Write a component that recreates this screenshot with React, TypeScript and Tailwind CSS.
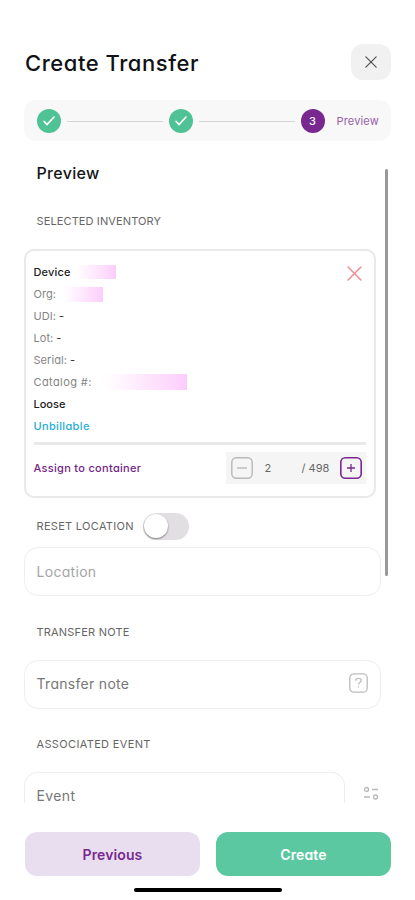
import React from "react";

const Check = () => (
  <span className="flex h-6 w-6 shrink-0 items-center justify-center rounded-full bg-[#4fc396]">
    <svg width="14" height="12" viewBox="0 0 14 12" fill="none" stroke="#fff" strokeWidth="1.6" strokeLinecap="round" strokeLinejoin="round">
      <path d="M2 6.3 5 9.6 12 2" />
    </svg>
  </span>
);

const Line = () => <span className="h-px w-24 shrink-0 bg-[#d6d6d6]" />;

const Cross = ({ size, color, width }: { size: number; color: string; width: number }) => (
  <svg width={size} height={size} viewBox="0 0 14 14" fill="none" stroke={color} strokeWidth={width} strokeLinecap="round">
    <path d="M1 1 13 13M13 1 1 13" />
  </svg>
);

const Detail = ({ label, value }: { label: string; value?: string }) => (
  <div className="flex h-[22px] items-center text-[11px] tracking-[0.05px] whitespace-nowrap text-[#858585]">
    {label}
    {value && <span className="ml-[3px] text-[#333]">{value}</span>}
  </div>
);

const redacted = "bg-gradient-to-r from-white to-[#fccdfb]";

export default function App() {
  return (
    <div className="flex h-[900px] w-[415px] flex-col overflow-hidden bg-white font-['Inter',sans-serif] [font-feature-settings:'cv11']">
      <header className="mt-11 ml-[25px] flex h-9 w-[366px] shrink-0 items-center justify-between">
        <h1 className="pt-0.5 text-[22px] font-medium tracking-[0.54px] text-[#111216]">Create Transfer</h1>
        <button className="flex h-9 w-10 items-center justify-center rounded-xl bg-[#f1f1f1]">
          <Cross size={12} color="#555" width={1.5} />
        </button>
      </header>

      <div className="mt-5 ml-6 flex h-[41px] w-[367px] shrink-0 items-center rounded-xl bg-[#f8f8f8] pt-px pl-[12.5px]">
        <Check />
        <span className="w-[6px] shrink-0" />
        <Line />
        <span className="w-[6px] shrink-0" />
        <Check />
        <span className="w-[6px] shrink-0" />
        <Line />
        <span className="w-[6px] shrink-0" />
        <span className="flex h-6 w-6 shrink-0 items-center justify-center rounded-full bg-[#792890] text-[11px] font-medium text-white">3</span>
        <span className="ml-3 text-[11px] tracking-[0.15px] text-[#9560a5]">Preview</span>
      </div>

      <div className="flex h-[662px] shrink-0 overflow-hidden pl-6">
        <main className="w-[357px] shrink-0">
          <h2 className="mt-5 ml-[12.5px] h-6 text-[16px] leading-6 font-medium tracking-[0.3px] text-[#151515]">Preview</h2>
          <div className="mt-7 ml-[12.5px] h-4 text-[11px] leading-4 tracking-[0.12px] text-[#666]">SELECTED INVENTORY</div>

          <section className="mt-5 h-[249px] w-[351.5px] rounded-[10px] border-2 border-[#e9e9e9] px-[7.5px] pt-[9px]">
            <div className="flex justify-between pt-px">
              <div>
                <div className="flex h-[22px] items-center text-[11px] font-medium tracking-[0.15px] text-[#222]">
                  <span className="w-[43px]">Device</span>
                  <span className={`h-[14px] w-[39px] ${redacted}`} />
                </div>
                <div className="flex items-center">
                  <span className="w-[30px]"><Detail label="Org:" /></span>
                  <span className={`h-[15px] w-[39px] ${redacted}`} />
                </div>
                <Detail label="UDI:" value="-" />
                <Detail label="Lot:" value="-" />
                <Detail label="Serial:" value="-" />
                <div className="flex items-center">
                  <span className="w-[71px] [&>div]:tracking-[0.4px]"><Detail label="Catalog #:" /></span>
                  <span className={`h-4 w-[82px] ${redacted}`} />
                </div>
                <div className="h-[22px] text-[11px] leading-[22px] font-medium text-[#222]">Loose</div>
                <div className="h-[22px] text-[11px] leading-[22px] font-medium tracking-[0.35px] text-[#27add5]">Unbillable</div>
              </div>
              <span className="mt-[5px] mr-[4.5px]"><Cross size={15} color="#f28b93" width={1.4} /></span>
            </div>
            <div className="mt-[5px] h-[3px] w-[332px] bg-[#e9e9e9]" />
            <div className="mt-[7px] flex h-8 w-[332px] items-center justify-between">
              <span className="text-[11px] font-medium tracking-[0.3px] text-[#742588]">Assign to container</span>
              <div className="flex h-8 w-[140px] items-center bg-[#f5f5f5] pl-[5px] text-[11px] text-[#666]">
                <svg width="22" height="22" viewBox="0 0 22 22" fill="none" stroke="#b9b9b9" strokeWidth="1.4">
                  <rect x="0.8" y="0.8" width="20.4" height="20.4" rx="4.5" />
                  <path d="M6 11h10" />
                </svg>
                <span className="ml-3 w-[37px]">2</span>
                <span className="w-[38px] whitespace-nowrap">/ 498</span>
                <svg width="22" height="22" viewBox="0 0 22 22" fill="none" stroke="#792890" strokeWidth="1.6">
                  <rect x="0.8" y="0.8" width="20.4" height="20.4" rx="4.5" />
                  <path d="M7 11h8M11 7v8" strokeWidth="1.3" />
                </svg>
              </div>
            </div>
          </section>

          <div className="mt-[14px] ml-[12.5px] flex h-7 items-center text-[11px] text-[#666]">
            <span className="w-[106px] tracking-[0.3px] whitespace-nowrap">RESET LOCATION</span>
            <span className="flex h-[27px] w-[46px] items-center rounded-full bg-[#e1dfe2] pl-px">
              <span className="h-6 w-6 rounded-full bg-white shadow-[0_1px_2px_rgba(0,0,0,0.45)]" />
            </span>
          </div>
          <div className="mt-[7px] flex h-[49px] items-center rounded-[14px] border border-[#eeeeee] pb-px pl-[11.5px] text-[14px] tracking-[0.3px] text-[#a5a5a5]">Location</div>

          <div className="mt-7 ml-[12.5px] h-4 text-[11px] leading-4 tracking-[0.2px] text-[#666]">TRANSFER NOTE</div>
          <div className="mt-5 flex h-[49px] items-center justify-between rounded-[14px] border border-[#eeeeee] pr-3 pb-0.5 pl-[11.5px] text-[14px] tracking-[0.3px] text-[#777]">
            <span>Transfer note</span>
            <svg className="mb-0.5" width="19" height="20" viewBox="0 0 19 20" fill="none" stroke="#bdbdbd" strokeWidth="1.3">
              <rect x="0.8" y="0.8" width="17.4" height="18.4" rx="4" />
              <path d="M6.8 7.8V7c0-1 1-1.7 2.7-1.7s2.7.8 2.7 2.1c0 1.9-2.7 1.8-2.7 4.3M9.5 13.2v1.3" />
            </svg>
          </div>

          <div className="mt-[27px] ml-[12.5px] h-4 text-[11px] leading-4 tracking-[0.35px] text-[#666]">ASSOCIATED EVENT</div>
          <div className="mt-5 flex">
            <div className="h-[31px] w-[321px] rounded-t-[14px] border border-b-0 border-[#eeeeee] pt-[15px] pl-[11.5px] text-[14px] leading-4 tracking-[0.4px] text-[#777]">Event</div>
            <svg className="mt-[13px] ml-[18px]" width="17" height="16" viewBox="0 0 17 16" fill="none" stroke="#b8b8b8" strokeWidth="1.3">
              <circle cx="3.5" cy="4.5" r="2" />
              <path d="M9 4.5h6M1 12h6" />
              <circle cx="12.5" cy="12" r="2" />
            </svg>
          </div>
        </main>
        <div className="mt-7 ml-1 h-[407px] w-[3px] shrink-0 rounded-full bg-[#999]" />
      </div>

      <footer className="mt-[29px] ml-[25px] flex w-[366px] shrink-0 gap-4 text-[14px] font-semibold tracking-[0.1px]">
        <button className="h-11 flex-1 rounded-xl bg-[#e9deef] text-[#792890]">Previous</button>
        <button className="h-11 flex-1 rounded-xl bg-[#5bc8a2] text-white">Create</button>
      </footer>
      <div className="mt-3 ml-[134px] h-[4px] w-[148px] shrink-0 rounded-full bg-black" />
    </div>
  );
}
